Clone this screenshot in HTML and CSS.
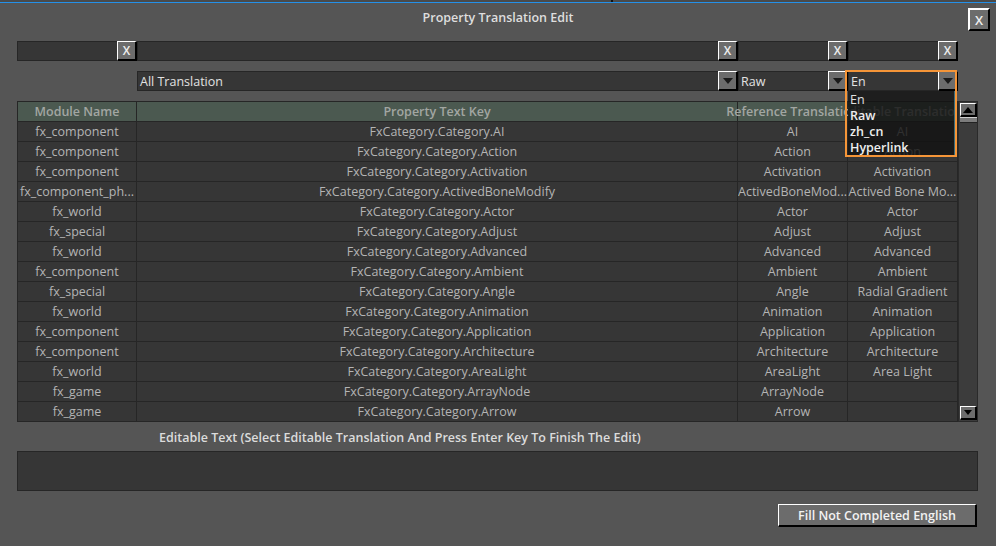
FILE: index.html
```html
<!DOCTYPE html>
<html>
<head>
<meta charset="utf-8">
<link rel="stylesheet" href="styles.css">
</head>
<body>
<div class="window">
  <div class="topline"><span class="tick"></span></div>
  <header class="titlebar">
    <div></div>
    <div class="title">Property Translation Edit</div>
    <div class="tb-right"><span class="bevel close">X</span></div>
  </header>

  <div class="filters">
    <div class="field c1"><span class="bevel xbtn">X</span></div>
    <div class="field c2"><span class="bevel xbtn">X</span></div>
    <div class="field c3"><span class="bevel xbtn">X</span></div>
    <div class="field c3"><span class="bevel xbtn">X</span></div>
  </div>

  <div class="selects">
    <div class="field c2"><span class="sel-text">All Translation</span><span class="bevel arrow"><svg width="10" height="6" viewBox="0 0 10 6"><polygon points="0,0 10,0 5,6" fill="#1a1a1a"/></svg></span></div>
    <div class="field c3"><span class="sel-text">Raw</span><span class="bevel arrow"><svg width="10" height="6" viewBox="0 0 10 6"><polygon points="0,0 10,0 5,6" fill="#1a1a1a"/></svg></span></div>
    <div class="field c3 open"><span class="sel-text">En</span><span class="bevel arrow"><svg width="10" height="6" viewBox="0 0 10 6"><polygon points="0,0 10,0 5,6" fill="#1a1a1a"/></svg></span>
      <ul class="droplist">
        <li class="first">En</li>
        <li>Raw</li>
        <li>zh_cn</li>
        <li>Hyperlink</li>
      </ul>
      <div class="focus-ring"></div>
    </div>
  </div>

  <div class="grid-wrap">
    <div class="table">
      <div class="row head">
        <div class="cell">Module Name</div>
        <div class="cell">Property Text Key</div>
        <div class="cell overflow"><span>Reference Translation</span></div>
        <div class="cell clip"><span>Editable Translation</span></div>
      </div>
      <div class="row"><div class="cell">fx_component</div><div class="cell">FxCategory.Category.AI</div><div class="cell">AI</div><div class="cell">AI</div></div>
      <div class="row"><div class="cell">fx_component</div><div class="cell">FxCategory.Category.Action</div><div class="cell">Action</div><div class="cell">Action</div></div>
      <div class="row"><div class="cell">fx_component</div><div class="cell">FxCategory.Category.Activation</div><div class="cell">Activation</div><div class="cell">Activation</div></div>
      <div class="row"><div class="cell">fx_component_ph...</div><div class="cell">FxCategory.Category.ActivedBoneModify</div><div class="cell">ActivedBoneMod...</div><div class="cell">Actived Bone Mo...</div></div>
      <div class="row"><div class="cell">fx_world</div><div class="cell">FxCategory.Category.Actor</div><div class="cell">Actor</div><div class="cell">Actor</div></div>
      <div class="row"><div class="cell">fx_special</div><div class="cell">FxCategory.Category.Adjust</div><div class="cell">Adjust</div><div class="cell">Adjust</div></div>
      <div class="row"><div class="cell">fx_world</div><div class="cell">FxCategory.Category.Advanced</div><div class="cell">Advanced</div><div class="cell">Advanced</div></div>
      <div class="row"><div class="cell">fx_component</div><div class="cell">FxCategory.Category.Ambient</div><div class="cell">Ambient</div><div class="cell">Ambient</div></div>
      <div class="row"><div class="cell">fx_special</div><div class="cell">FxCategory.Category.Angle</div><div class="cell">Angle</div><div class="cell">Radial Gradient</div></div>
      <div class="row"><div class="cell">fx_world</div><div class="cell">FxCategory.Category.Animation</div><div class="cell">Animation</div><div class="cell">Animation</div></div>
      <div class="row"><div class="cell">fx_component</div><div class="cell">FxCategory.Category.Application</div><div class="cell">Application</div><div class="cell">Application</div></div>
      <div class="row"><div class="cell">fx_component</div><div class="cell">FxCategory.Category.Architecture</div><div class="cell">Architecture</div><div class="cell">Architecture</div></div>
      <div class="row"><div class="cell">fx_world</div><div class="cell">FxCategory.Category.AreaLight</div><div class="cell">AreaLight</div><div class="cell">Area Light</div></div>
      <div class="row"><div class="cell">fx_game</div><div class="cell">FxCategory.Category.ArrayNode</div><div class="cell">ArrayNode</div><div class="cell"></div></div>
      <div class="row"><div class="cell">fx_game</div><div class="cell">FxCategory.Category.Arrow</div><div class="cell">Arrow</div><div class="cell"></div></div>
    </div>
    <div class="vscroll">
      <span class="bevel sbtn"><svg width="10" height="6" viewBox="0 0 10 6"><polygon points="0,6 10,6 5,0" fill="#000"/></svg></span>
      <span class="thumb"></span>
      <span class="track"></span>
      <span class="bevel sbtn small"><svg width="8" height="5" viewBox="0 0 8 5"><polygon points="0,0 8,0 4,5" fill="#000"/></svg></span>
    </div>
  </div>

  <div class="edit-label">Editable Text (Select Editable Translation And Press Enter Key To Finish The Edit)</div>
  <div class="edit-box"></div>

  <div class="actions"><span class="bevel fill">Fill Not Completed English</span></div>
</div>
</body>
</html>
```

FILE: styles.css
```css
html, body {
  margin: 0;
  padding: 0;
  background: #555555;
}
body {
  font-family: "Open Sans", "Noto Sans", "DejaVu Sans", sans-serif;
  font-size: 12.5px;
  font-weight: 500;
  color: #b4b4b4;
  width: 996px;
  height: 546px;
  overflow: hidden;
}
.window {
  display: flex;
  flex-direction: column;
}
.topline {
  height: 2px;
  background: #4a4a4a;
  border-bottom: 1px solid #2490e8;
  display: flex;
}
.tick {
  width: 2px;
  height: 2px;
  background: #111;
  margin-left: 611px;
}
.titlebar {
  height: 38px;
  display: grid;
  grid-template-columns: 1fr auto 1fr;
  align-items: start;
}
.title {
  margin-top: 5px;
  line-height: 20px;
  font-weight: 600;
  color: #dedede;
}
.tb-right {
  display: flex;
  justify-content: flex-end;
  padding-right: 6px;
  padding-top: 5px;
}
.bevel {
  box-sizing: border-box;
  background: #6c6c6c;
  border-top: 1px solid #ffffff;
  border-left: 1px solid #ffffff;
  border-right: 2px solid #000000;
  border-bottom: 2px solid #000000;
  display: flex;
  align-items: center;
  justify-content: center;
  color: #f0f0f0;
  font-weight: 600;
}
.close {
  width: 22px;
  height: 23px;
  font-size: 13px;
  border-top-width: 2px;
  border-left-width: 2px;
}
.filters, .selects {
  display: flex;
  height: 20px;
}
.filters {
  margin-left: 17px;
}
.selects {
  margin-top: 10px;
  margin-left: 137px;
}
.field {
  box-sizing: border-box;
  height: 20px;
  background: #363636;
  border: 1px solid #262626;
  display: flex;
  justify-content: flex-end;
  align-items: center;
  position: relative;
}
.c1 { width: 120px; }
.c2 { width: 601px; }
.c3 { width: 110px; }
.xbtn {
  width: 20px;
  height: 20px;
  margin-right: -1px;
  font-size: 12px;
}
.sel-text {
  flex: 1;
  padding-left: 2px;
  padding-top: 1px;
  color: #e2e2e2;
  line-height: 18px;
  white-space: nowrap;
}
.arrow {
  width: 20px;
  height: 20px;
  margin-right: -1px;
}
.droplist {
  position: absolute;
  left: -1px;
  top: 19px;
  width: 107px;
  height: 64px;
  margin: 0;
  padding: 1px 0 0 0;
  box-sizing: border-box;
  list-style: none;
  background: rgba(18, 18, 18, 0.82);
  border-right: 1px solid #3a6a78;
  z-index: 5;
}
.droplist li {
  line-height: 16px;
  padding-left: 2px;
  color: #eeeeee;
  font-weight: 600;
}
.droplist li.first {
  font-weight: 500;
  color: #e0e0e0;
}
.focus-ring {
  position: absolute;
  left: -4px;
  top: -2px;
  width: 112px;
  height: 87px;
  box-sizing: border-box;
  border: 2px solid #f59538;
  z-index: 6;
  pointer-events: none;
}
.grid-wrap {
  margin-top: 10px;
  margin-left: 17px;
  display: flex;
  align-items: flex-start;
}
.table {
  width: 941px;
  border-top: 1px solid #262626;
  border-left: 1px solid #262626;
  box-sizing: border-box;
}
.row {
  display: grid;
  grid-template-columns: 119px 601px 110px 110px;
  height: 20px;
}
.cell {
  box-sizing: border-box;
  background: #363636;
  border-right: 1px solid #262626;
  border-bottom: 1px solid #262626;
  display: flex;
  justify-content: center;
  align-items: center;
  white-space: nowrap;
  overflow: hidden;
  line-height: 18px;
}
.head .cell {
  background: #4b5950;
  color: #a2a6a2;
  font-weight: 600;
  padding-top: 1px;
}
.head .cell.overflow {
  overflow: visible;
}
.head .cell.clip {
  position: relative;
}
.vscroll {
  width: 20px;
  height: 321px;
  box-sizing: border-box;
  background: #3c3c3c;
  border: 1px solid #2a2a2a;
  display: flex;
  flex-direction: column;
  align-items: center;
  padding-top: 1px;
  padding-bottom: 1px;
}
.sbtn {
  width: 17px;
  height: 14px;
  flex: none;
}
.thumb {
  width: 17px;
  height: 6px;
  box-sizing: border-box;
  background: #7c7c7c;
  border-top: 1px solid #cfcfcf;
  border-bottom: 1px solid #222;
  flex: none;
}
.track {
  flex: 1;
}
.edit-label {
  margin-top: 8px;
  margin-left: 159px;
  line-height: 16px;
  font-weight: 600;
  color: #dcdcdc;
}
.edit-box {
  margin: 5px 18px 0 17px;
  height: 40px;
  box-sizing: border-box;
  background: #363636;
  border: 1px solid #262626;
}
.actions {
  display: flex;
  justify-content: flex-end;
  margin-top: 13px;
  padding-right: 19px;
}
.fill {
  width: 199px;
  height: 23px;
  color: #f2f2f2;
}
```
